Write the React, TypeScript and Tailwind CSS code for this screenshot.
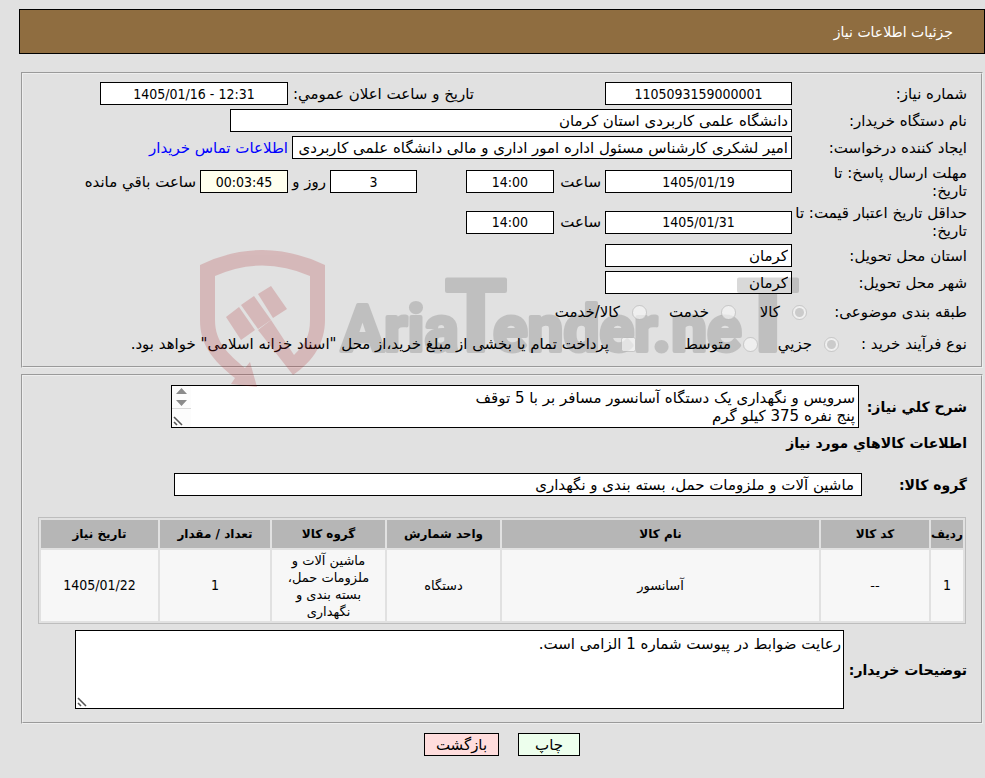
import React from 'react';
import clsx from 'clsx';

interface FieldProps {
  id: string;
  label?: string;
  value: string;
  className?: string;
  centered?: boolean;
}

// Numbers and dates are centred and set in the condensed face
const Field: React.FC<FieldProps> = ({ id, label, value, className, centered }) => (
  <input
    id={id}
    type="text"
    readOnly
    aria-label={label}
    defaultValue={value}
    dir={centered ? 'ltr' : 'rtl'}
    className={clsx(
      'h-[23px] shrink-0 border border-black bg-white px-[3px] outline-none',
      centered && "text-center font-['DejaVu_Sans_Condensed','DejaVu_Sans',sans-serif] text-[14px]",
      className
    )}
  />
);

interface RowProps {
  label: React.ReactNode;
  htmlFor?: string;
  labelClassName?: string;
  className?: string;
  children: React.ReactNode;
}

const Row: React.FC<RowProps> = ({
  label,
  htmlFor,
  labelClassName = 'w-[175px]',
  className = 'h-[23px]',
  children,
}) => (
  <div className={clsx('flex items-center whitespace-nowrap', className)}>
    {htmlFor ? (
      <label htmlFor={htmlFor} className={clsx('shrink-0', labelClassName)}>
        {label}
      </label>
    ) : (
      <span className={clsx('shrink-0', labelClassName)}>{label}</span>
    )}
    {children}
  </div>
);

interface OptionProps {
  type?: 'radio' | 'checkbox';
  name: string;
  label: string;
  checked?: boolean;
  className?: string;
}

const Option: React.FC<OptionProps> = ({ type = 'radio', name, label, checked, className }) => (
  <label className={clsx('flex shrink-0 items-center gap-3', className)}>
    <input
      type={type}
      name={name}
      defaultChecked={checked}
      disabled
      className="relative z-20 size-[15px] shrink-0"
    />
    <span>{label}</span>
  </label>
);

const Resizer = () => (
  <svg className="absolute bottom-[2px] left-[2px]" width="10" height="10" viewBox="0 0 10 10">
    <path d="M1 1 L9 9 M1 6 L4 9" stroke="#555" strokeWidth="1.6" fill="none" />
  </svg>
);

const ScrollArrows = () => (
  <div className="absolute top-px left-px h-[41px] w-[19px] bg-[#fcfcfc]">
    <svg width="19" height="41" viewBox="0 0 19 41">
      <path d="M4 8 L9.500 2 L15 8 Z M4 14 L9.500 20 L15 14 Z" fill="#8b8b8b" />
      <path d="M0 22.500 H19" stroke="#d9d9d9" />
    </svg>
  </div>
);

const Watermark = () => (
  <svg
    className="pointer-events-none absolute top-[250px] left-[200px] z-10"
    width="620"
    height="138"
    viewBox="0 0 620 138"
    aria-hidden="true"
  >
    <g fill="#aa191e" opacity="0.2">
      <path d="M0 15 Q62 -15 125 15 V70 C125 92 114 111 93 125 L58 80 L71 70 L94 105 C105 94 110 86 110 70 V26 Q62 5 15 26 V70 C15 92 28 104 45 118 L50 112 L57 137 L31 134 L35 128 C12 110 0 94 0 70 Z" />
      <path d="M26 67 L39 57 L55 80 L41 90 Z M41 55 L54 46 L71 70 L58 79 Z M58 44 L71 36 L87 59 L73 68 Z" />
    </g>
    <g
      fill="#000"
      stroke="#000"
      strokeWidth="4"
      strokeLinejoin="round"
      opacity="0.147"
      fontFamily="Roboto, sans-serif"
      fontWeight="bold"
      direction="ltr"
    >
      <text x="141" y="101" fontSize="64">Aria</text>
      <text x="245" y="101" fontSize="100">T</text>
      <text x="293" y="101" fontSize="64">ender.ne</text>
      <text x="537" y="101" fontSize="100">T</text>
    </g>
  </svg>
);

const COLUMNS = [
  { title: 'ردیف', value: '1', width: 'w-[32px]', numeric: true },
  { title: 'کد کالا', value: '--', width: 'w-[108px]' },
  { title: 'نام کالا', value: 'آسانسور', width: '' },
  { title: 'واحد شمارش', value: 'دستگاه', width: 'w-[113px]' },
  { title: 'گروه کالا', value: 'ماشین آلات و ملزومات حمل، بسته بندی و نگهداری', width: 'w-[113px]' },
  { title: 'تعداد / مقدار', value: '1', width: 'w-[110px]', numeric: true },
  { title: 'تاریخ نیاز', value: '1405/01/22', width: 'w-[117px]', numeric: true },
];

const panel = 'border-2 border-[#eeeeee] [border-style:groove] pr-[14px]';

export default function App() {
  return (
    <main
      dir="rtl"
      className="relative min-h-screen overflow-x-hidden bg-[#e1e1e1] pt-[9px] font-['DejaVu_Sans',sans-serif] text-[15px] leading-[18px] text-black"
    >
      <h1 className="ml-[19px] flex h-[45px] items-center border border-black bg-[#8f6d40] pr-[31px] text-[14px] text-white">
        جزئیات اطلاعات نیاز
      </h1>

      <div className="mr-[2px] ml-[21px]">
        <fieldset className={clsx(panel, 'mt-[18px] flex flex-col gap-1 pt-2 pb-2')}>
          <Row label="شماره نیاز:" htmlFor="need-no">
            <Field id="need-no" value="1105093159000001" centered className="w-[187px]" />
            <label htmlFor="announce" className="mr-[131px] w-[186px] shrink-0">
              تاریخ و ساعت اعلان عمومي:
            </label>
            <Field id="announce" value="1405/01/16 - 12:31" centered className="w-[188px]" />
          </Row>
          <Row label="نام دستگاه خریدار:" htmlFor="buyer">
            <Field id="buyer" value="دانشگاه علمی کاربردی استان کرمان" className="w-[562px]" />
          </Row>
          <Row label="ایجاد کننده درخواست:" htmlFor="creator">
            <Field
              id="creator"
              value="امیر لشکری کارشناس مسئول اداره امور اداری و مالی دانشگاه علمی کاربردی استان کرمان"
              className="w-[500px]"
            />
            <a href="#contact" className="mr-1 text-[#0000ff]">
              اطلاعات تماس خریدار
            </a>
          </Row>
          <Row label={<>مهلت ارسال پاسخ: تا<br />تاریخ:</>} htmlFor="deadline" className="h-[37px]">
            <Field id="deadline" value="1405/01/19" centered className="w-[187px]" />
            <label htmlFor="deadline-time" className="mr-1 w-[47px] shrink-0">ساعت</label>
            <Field id="deadline-time" value="14:00" centered className="w-[88px]" />
            <Field id="days-left" label="روز" value="3" centered className="mr-[49px] w-[87px]" />
            <label htmlFor="days-left" className="mr-1 w-[38px] shrink-0">روز و</label>
            <Field id="time-left" value="00:03:45" centered className="w-[88px] !bg-[#ffffee]" />
            <label htmlFor="time-left" className="mr-1">ساعت باقي مانده</label>
          </Row>
          <Row label={<>حداقل تاریخ اعتبار قیمت: تا<br />تاریخ:</>} htmlFor="validity" className="h-9">
            <Field id="validity" value="1405/01/31" centered className="w-[187px]" />
            <label htmlFor="validity-time" className="mr-1 w-[47px] shrink-0">ساعت</label>
            <Field id="validity-time" value="14:00" centered className="w-[88px]" />
          </Row>
          <Row label="استان محل تحویل:" htmlFor="province">
            <Field id="province" value="کرمان" className="w-[187px]" />
          </Row>
          <Row label="شهر محل تحویل:" htmlFor="city">
            <Field id="city" value="کرمان" className="w-[187px]" />
          </Row>
          <Row label="طبقه بندی موضوعی:" labelClassName="w-[160px]" className="h-7">
            <Option name="category" label="کالا" checked className="w-[71px]" />
            <Option name="category" label="خدمت" className="w-[89px]" />
            <Option name="category" label="کالا/خدمت" />
          </Row>
          <Row label="نوع فرآیند خرید :" labelClassName="w-[128px]" className="h-7">
            <Option name="process" label="جزیي" checked className="w-[81px]" />
            <Option name="process" label="متوسط" className="w-[122px]" />
            <Option
              type="checkbox"
              name="treasury"
              label={'پرداخت تمام یا بخشی از مبلغ خرید،از محل "اسناد خزانه اسلامی" خواهد بود.'}
            />
          </Row>
        </fieldset>

        <fieldset className={clsx(panel, 'mt-[6px] pt-[9px] pb-[13px]')}>
          <div className="flex items-center">
            <label htmlFor="summary" className="w-[108px] shrink-0 text-[14px] font-bold whitespace-nowrap">
              شرح کلي نیاز:
            </label>
            <div className="relative w-[688px]">
              <textarea
                id="summary"
                readOnly
                defaultValue={'سرویس و نگهداری یک دستگاه آسانسور مسافر بر با 5 توقف\nپنج نفره 375 کیلو گرم'}
                className="block h-[43px] w-full resize-none overflow-hidden border border-black bg-white px-[3px] py-[3px]"
              />
              <ScrollArrows />
              <Resizer />
            </div>
          </div>

          <h2 className="mt-[6px] text-[14px] font-bold">اطلاعات کالاهاي مورد نیاز</h2>

          <div className="mt-[21px] flex items-center">
            <label htmlFor="group" className="w-[105px] shrink-0 text-[14px] font-bold">
              گروه کالا:
            </label>
            <Field
              id="group"
              value="ماشین آلات و ملزومات حمل، بسته بندی و نگهداری"
              className="w-[688px] !px-[7px]"
            />
          </div>

          <div className="mt-[21px] mr-px ml-[15px]">
            <table className="w-full table-fixed border-separate border-spacing-[2px] border border-[#bdbdbd] text-center leading-[17px]">
              <thead>
                <tr className="h-[28px] bg-[#b6b6b6]">
                  {COLUMNS.map((column) => (
                    <th key={column.title} className={clsx('p-0 text-[12px] whitespace-nowrap', column.width)}>
                      {column.title}
                    </th>
                  ))}
                </tr>
              </thead>
              <tbody>
                <tr className="h-[71px] bg-[#f7f7f7]">
                  {COLUMNS.map((column) => (
                    <td
                      key={column.title}
                      className={clsx(
                        'px-3 py-px',
                        column.numeric
                          ? "font-['DejaVu_Sans_Condensed','DejaVu_Sans',sans-serif] text-[14px]"
                          : 'text-[13px]'
                      )}
                    >
                      {column.value}
                    </td>
                  ))}
                </tr>
              </tbody>
            </table>
          </div>

          <div className="mt-[6px] flex items-center">
            <label htmlFor="notes" className="w-[123px] shrink-0 text-[14px] font-bold whitespace-nowrap">
              توضیحات خریدار:
            </label>
            <div className="relative w-[769px]">
              <textarea
                id="notes"
                readOnly
                defaultValue="رعایت ضوابط در پیوست شماره 1 الزامی است."
                className="block h-[79px] w-full resize-none border border-black bg-white px-[2px] py-[4px]"
              />
              <Resizer />
            </div>
          </div>
        </fieldset>

        <div className="mt-[9px] flex justify-center gap-[19px]">
          <button type="button" className="h-[23px] w-[62px] border border-black bg-[#edffed]">
            چاپ
          </button>
          <button type="button" className="h-[23px] w-[75px] border border-black bg-[#ffdddd]">
            بازگشت
          </button>
        </div>
      </div>

      <Watermark />
    </main>
  );
}
